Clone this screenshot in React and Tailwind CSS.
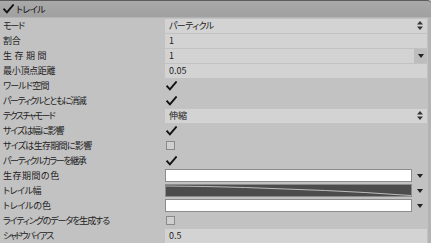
import React from "react";

const Check = () => (
  <svg width="11" height="10" viewBox="0 0 11 10" className="block">
    <path d="M1.2 5.4 L3.9 8.3 L10 1.2" fill="none" stroke="#111" strokeWidth="1.9" strokeLinecap="square" />
  </svg>
);

const Box = () => (
  <div className="w-[9px] h-[9px] border border-[#8a8a8a] bg-[#cfcfcf]" />
);

const UpDown = () => (
  <svg width="6" height="9" viewBox="0 0 6 9" className="block">
    <path d="M0 3.5 L3 0 L6 3.5 Z M0 5.5 L3 9 L6 5.5 Z" fill="#333" />
  </svg>
);

const Down = () => (
  <svg width="6" height="4" viewBox="0 0 6 4" className="block">
    <path d="M0 0 L6 0 L3 4 Z" fill="#222" />
  </svg>
);

function Row({ label, tr, children }) {
  return (
    <div className="flex h-[15px] items-center">
      <div className={`w-[165px] pl-[3px] text-[9px] leading-none text-[#222] whitespace-nowrap ${tr}`}>{label}</div>
      <div className="flex-1 h-full mr-[4px] flex items-center">{children}</div>
    </div>
  );
}

const Field = ({ children, right, tr = "" }) => (
  <div className="flex h-[14px] w-full bg-[#d3d3d3] items-center">
    <div className={`flex-1 pl-[4px] text-[9px] leading-none text-[#222] ${tr}`}>{children}</div>
    {right}
  </div>
);

const CheckCell = ({ on }) => (
  <div className="pl-[1px]">{on ? <Check /> : <Box />}</div>
);

const Swatch = ({ children, dark }) => (
  <div className="flex w-full h-[14px] items-center">
    <div className={`flex-1 h-[13px] border border-[#8c8c8c] ${dark ? "bg-[#4c4c4c]" : "bg-white"} relative overflow-hidden`}>{children}</div>
    <div className="w-[15px] flex justify-center"><Down /></div>
  </div>
);

export default function App() {
  return (
    <div className="w-[431px] h-[243px] bg-[#c2c2c2] overflow-hidden relative" style={{ fontFamily: '"Noto Sans CJK JP", "Noto Sans", sans-serif', fontFeatureSettings: '"palt"' }}>
      <div className="h-[17px] bg-gradient-to-b from-[#a9a9a9] to-[#a0a0a0] border-t border-[#5c5c5c] rounded-tr-[4px] flex items-center pl-[3px] gap-[2px] shadow-[0_1px_0_#b4b4b4]">
        <Check />
        <span className="text-[9px] leading-none text-[#111] tracking-[-0.5px]">トレイル</span>
      </div>
      <div className="h-[1px]" />
      <Row label="モード" tr="tracking-[-1.2px]"><Field tr="tracking-[-0.6px]" right={<div className="w-[14px] flex justify-center"><UpDown /></div>}>パーティクル</Field></Row>
      <Row label="割合" tr="tracking-[-0.3px]"><Field>1</Field></Row>
      <Row label="生存期間" tr="tracking-[2.5px]"><Field right={<div className="w-[13px] h-full bg-[#bdbdbd] flex items-center justify-center"><Down /></div>}>1</Field></Row>
      <Row label="最小頂点距離" tr="tracking-[-0.3px]"><Field>0.05</Field></Row>
      <Row label="ワールド空間" tr="tracking-[-0.8px]"><CheckCell on /></Row>
      <Row label="パーティクルとともに消滅" tr="tracking-[-1.4px]"><CheckCell on /></Row>
      <Row label="テクスチャモード" tr="tracking-[-1.6px]"><Field right={<div className="w-[14px] flex justify-center"><UpDown /></div>}>伸縮</Field></Row>
      <Row label="サイズは幅に影響" tr="tracking-[-1.1px]"><CheckCell on /></Row>
      <Row label="サイズは生存期間に影響" tr="tracking-[-0.7px]"><CheckCell /></Row>
      <Row label="パーティクルカラーを継承" tr="tracking-[-1.4px]"><CheckCell on /></Row>
      <Row label="生存期間の色" tr="tracking-[0.5px]"><Swatch /></Row>
      <Row label="トレイル幅" tr="tracking-[-0.4px]">
        <Swatch dark>
          <svg className="absolute inset-0" width="100%" height="100%" viewBox="0 0 246 11" preserveAspectRatio="none">
            <path d="M0 1 L40 1.5 L80 2.5 L120 4 L160 5.5 L200 7.5 L230 9.5 L246 10.5" fill="none" stroke="#bdbdbd" strokeWidth="1" />
          </svg>
        </Swatch>
      </Row>
      <Row label="トレイルの色" tr="tracking-[-0.2px]"><Swatch /></Row>
      <Row label="ライティングのデータを生成する" tr="tracking-[-1.1px]"><CheckCell /></Row>
      <Row label="シャドウバイアス" tr="tracking-[-1.8px]"><Field>0.5</Field></Row>
      <div className="absolute right-0 top-[17px] bottom-0 w-[3px] bg-[#b3b3b3]" />
    </div>
  );
}
